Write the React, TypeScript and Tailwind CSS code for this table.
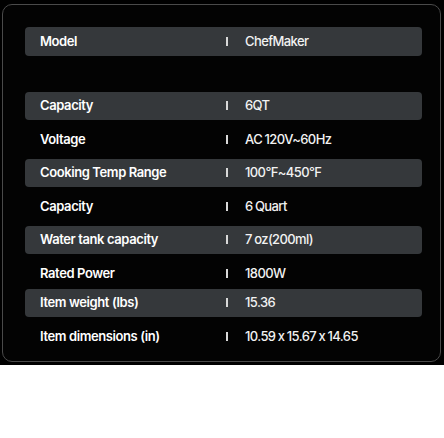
const SPECS: { label: string; value: string; tight?: boolean }[] = [
  { label: "Capacity", value: "6QT" },
  { label: "Voltage", value: "AC 120V~60Hz" },
  { label: "Cooking Temp Range", value: "100°F~450°F" },
  { label: "Capacity", value: "6 Quart" },
  { label: "Water tank capacity", value: "7 oz(200ml)" },
  { label: "Rated Power", value: "1800W" },
  { label: "Item weight (lbs)", value: "15.36", tight: true },
  { label: "Item dimensions (in)", value: "10.59 x 15.67 x 14.65" },
];

function SpecRow({ label, value, shaded }: { label: string; value: string; shaded: boolean }) {
  return (
    <div
      className={`h-[28.5px] rounded-[4px] pl-[15px] flex items-center text-[13px] ${
        shaded ? "bg-[#35383b]" : ""
      }`}
    >
      <span className="w-[186px] font-semibold text-white tracking-[-0.4px]">{label}</span>
      <span className="w-[2px] h-[9px] bg-[#d8d8d8]" />
      <span className="ml-[17px] font-medium text-[#f2f2f2] tracking-[-0.6px] [word-spacing:-0.5px]">
        {value}
      </span>
    </div>
  );
}

export default function App() {
  return (
    <div
      className="bg-black w-[444px] h-[365px] pt-[4px] pl-[2px] pr-[3px]"
      style={{ fontFamily: "Inter, 'Noto Sans', sans-serif" }}
    >
      <div className="h-[358px] border border-[#4a4a4a] rounded-[10px] bg-[#030303] pt-[22px] pl-[22px] pr-[18px]">
        <SpecRow label="Model" value="ChefMaker" shaded />
        <div className="h-[36px]" />
        <div className="flex flex-col">
          {SPECS.map((s, i) => (
            <div key={s.label + i} className={i === 0 ? "" : s.tight ? "mt-px" : "mt-[5px]"}>
              <SpecRow label={s.label} value={s.value} shaded={i % 2 === 0} />
            </div>
          ))}
        </div>
      </div>
    </div>
  );
}
